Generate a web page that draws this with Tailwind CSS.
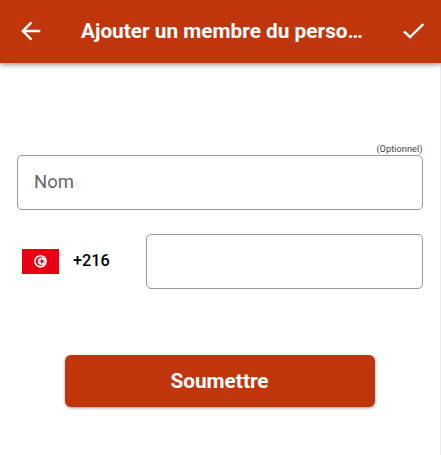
<!DOCTYPE html>
<html lang="fr">
<head>
<meta charset="utf-8">
<title>Ajouter un membre du personnel</title>
<script src="https://cdn.jsdelivr.net/npm/@tailwindcss/browser@4"></script>
</head>
<body class="bg-white font-[Roboto,sans-serif]">
<div class="w-[441px] h-[455px] overflow-hidden flex flex-col">
  <header class="relative h-[62.5px] w-[441px] shrink-0 bg-[#bf360c] flex items-center text-white shadow-[0_2px_5px_rgba(0,0,0,0.4)]">
    <button class="w-[81px] h-full shrink-0 pl-[20.5px] flex items-center" aria-label="Retour">
      <svg class="w-[20px] h-[20px]" viewBox="0 0 20 20" fill="none" stroke="currentColor" stroke-width="2.4"><path d="M19.300 10H2M10.500 1.300L1.800 10L10.500 18.700"/></svg>
    </button>
    <h1 class="w-[290px] shrink-0 whitespace-nowrap text-[20.8px] leading-6 font-bold">Ajouter un membre du perso…</h1>
    <button class="w-[70px] h-full shrink-0 pl-[32px] flex items-center" aria-label="Valider">
      <svg class="w-[22px] h-[16px]" viewBox="0 0 22 16" fill="none" stroke="currentColor" stroke-width="2.400"><path d="M1 8.300L7 14.100L20.300 1.100"/></svg>
    </button>
  </header>
  <main class="flex-1 pt-[80.5px] pl-[16.5px] pr-[17.5px] flex flex-col border-r border-[#ececec]">
    <div class="h-3 text-right text-[9.3px] leading-3 text-[#444]">(Optionnel)</div>
    <div class="h-[55px] rounded-[5px] border border-[#999] pl-[16.5px] flex items-center text-[18.5px] text-[#666]">Nom</div>
    <div class="mt-[23.5px] h-[55px] flex items-center">
      <svg class="ml-[5.5px] w-[37px] h-[25px] shrink-0" viewBox="0 0 37 25">
        <rect width="37" height="25" fill="#e70013"/>
        <circle cx="18.500" cy="12.300" r="6.300" fill="#fff"/>
        <circle cx="18.500" cy="12.300" r="4.700" fill="#e70013"/>
        <circle cx="19.700" cy="12.300" r="3.800" fill="#fff"/>
        <path fill="#e70013" d="M17 12.300L19.100 11.600V9.400L20.400 11.200L22.500 10.500L21.200 12.300L22.500 14.100L20.400 13.400L19.100 15.200V13Z"/>
      </svg>
      <span class="ml-[14px] w-[73px] shrink-0 pt-px text-[16.300px] font-medium text-black">+216</span>
      <div class="h-full flex-1 rounded-[5px] border border-[#999]"></div>
    </div>
    <button class="mt-[66.5px] ml-[48px] w-[310px] h-[51.5px] shrink-0 rounded-[6px] bg-[#bf360c] pt-px text-white text-[20.8px] font-bold shadow-[0_1px_3px_rgba(0,0,0,0.4)]">Soumettre</button>
  </main>
</div>
</body>
</html>
